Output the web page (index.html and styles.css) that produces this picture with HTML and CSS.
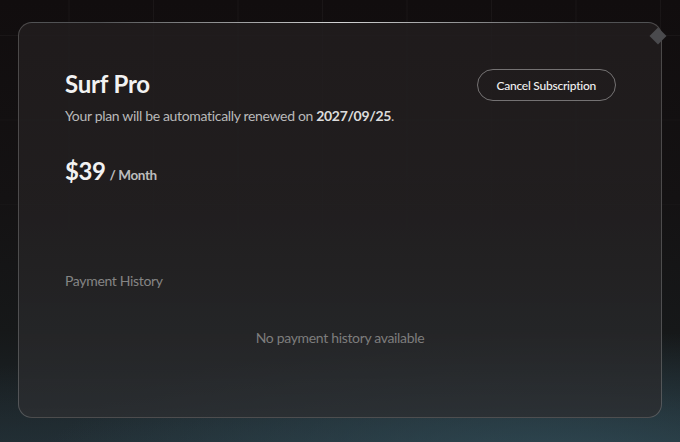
FILE: index.html
```html
<!DOCTYPE html>
<html lang="en">

<head>
    <meta charset="UTF-8">
    <meta name="viewport" content="width=device-width, initial-scale=1.0">
    <title>Subscription</title>
    <link rel="stylesheet" href="styles.css">
</head>

<body>
    <div class="grid"></div>
    <div class="card">
        <span class="corner"></span>
        <div class="plan-header">
            <div class="plan-info">
                <h1 class="plan-name">Surf Pro</h1>
                <p class="plan-renewal">Your plan will be automatically renewed on <strong>2027/09/25</strong>.</p>
            </div>
            <button class="cancel-btn">Cancel Subscription</button>
        </div>

        <div class="price">
            <span class="amount">$39</span>
            <span class="period">/ Month</span>
        </div>

        <div class="history">
            <h2 class="history-title">Payment History</h2>
            <p class="history-empty">No payment history available</p>
        </div>
    </div>
</body>

</html>
```

FILE: styles.css
```css
* {
    margin: 0;
    padding: 0;
    box-sizing: border-box;
    font-family: Lato, "Open Sans", sans-serif;
}

body {
    width: 680px;
    height: 442px;
    overflow: hidden;
    position: relative;
    padding: 22px 18px 24px;
    background:
        radial-gradient(ellipse 520px 140px at 560px 470px, rgba(52, 82, 94, 0.75), transparent),
        radial-gradient(ellipse 700px 120px at 200px 480px, rgba(40, 56, 64, 0.7), transparent),
        linear-gradient(180deg, #110d0e 0%, #141213 45%, #161819 75%, #1d272c 100%);
}

.grid {
    position: absolute;
    inset: 0;
    background-image:
        linear-gradient(90deg, rgba(255, 255, 255, 0.04) 1px, transparent 1px),
        linear-gradient(180deg, rgba(255, 255, 255, 0.04) 1px, transparent 1px);
    background-size: 84.5px 84.5px;
    background-position: -16px 35px;
    -webkit-mask-image: linear-gradient(180deg, #000 0%, rgba(0, 0, 0, 0.5) 40%, transparent 70%);
    mask-image: linear-gradient(180deg, #000 0%, rgba(0, 0, 0, 0.5) 40%, transparent 70%);
}

.card {
    position: relative;
    height: 396px;
    padding: 46px 45px 0 46px;
    border: 1px solid rgba(255, 255, 255, 0.2);
    border-radius: 14px;
    background: linear-gradient(180deg, rgba(34, 30, 31, 0.82) 0%, rgba(35, 33, 34, 0.85) 50%, rgba(44, 46, 49, 0.8) 100%);
}

.card::before {
    content: "";
    position: absolute;
    top: -1px;
    left: 80px;
    right: 80px;
    height: 1px;
    background: linear-gradient(90deg, transparent, rgba(255, 255, 255, 0.75) 50%, transparent);
}

.corner {
    position: absolute;
    top: 7px;
    right: -3px;
    width: 12px;
    height: 12px;
    background-color: #4a4a4d;
    transform: rotate(45deg);
}

.plan-header {
    display: flex;
    justify-content: space-between;
    align-items: flex-start;
}

.plan-name {
    font-size: 24px;
    line-height: 30px;
    font-weight: 700;
    letter-spacing: -0.2px;
    color: #f2f2f2;
}

.plan-renewal {
    margin-top: 7px;
    font-size: 14px;
    line-height: 20px;
    letter-spacing: -0.33px;
    color: #b9b9b9;
}

.plan-renewal strong {
    color: #dcdcdc;
    font-weight: 700;
}

.cancel-btn {
    height: 32px;
    padding: 0 19px;
    border: 1px solid rgba(255, 255, 255, 0.38);
    border-radius: 16px;
    background: transparent;
    color: #f0f0f0;
    font-size: 12px;
    font-weight: 500;
    letter-spacing: -0.25px;
}

.price {
    margin-top: 30px;
    display: flex;
    align-items: baseline;
    gap: 4px;
    line-height: 30px;
}

.amount {
    font-size: 24px;
    font-weight: 700;
    letter-spacing: -0.4px;
    color: #f2f2f2;
}

.period {
    font-size: 13.5px;
    font-weight: 700;
    letter-spacing: -0.4px;
    color: #bdbdbd;
}

.history {
    margin-top: 81px;
}

.history-title {
    font-size: 14px;
    line-height: 20px;
    font-weight: 400;
    letter-spacing: -0.33px;
    color: #858585;
}

.history-empty {
    margin-top: 37px;
    margin-right: 1px;
    text-align: center;
    font-size: 14px;
    line-height: 20px;
    letter-spacing: -0.33px;
    color: #7d7d7d;
}
```
